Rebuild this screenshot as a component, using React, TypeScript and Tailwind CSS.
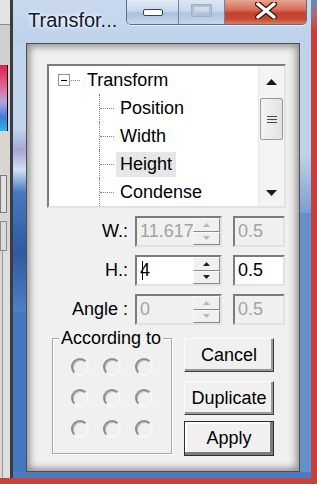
import React from "react";

const sunken =
    "border-2 border-t-[#7c7c7c] border-l-[#7c7c7c] border-r-[#e2e2e2] border-b-[#e2e2e2]";

const SpinArrows = ({ disabled }: { disabled?: boolean }) => {
    const fill = disabled ? "#b8b8b8" : "#202020";
    return (
        <div className="w-[27px] flex flex-col bg-[#f0f0f0]">
            <div className="flex-1 flex items-center justify-center border border-t-[#fafafa] border-l-[#fafafa] border-r-[#8a8a8a] border-b-[#8a8a8a]">
                <svg width="7" height="4" viewBox="0 0 7 4">
                    <path d="M0 4 L3.5 0 L7 4 Z" fill={fill} />
                </svg>
            </div>
            <div className="flex-1 flex items-center justify-center border border-t-[#fafafa] border-l-[#fafafa] border-r-[#8a8a8a] border-b-[#8a8a8a]">
                <svg width="7" height="4" viewBox="0 0 7 4">
                    <path d="M0 0 L3.5 4 L7 0 Z" fill={fill} />
                </svg>
            </div>
        </div>
    );
};

const FieldRow = ({
    label,
    value,
    step,
    disabled,
    caret,
}: {
    label: string;
    value: string;
    step: string;
    disabled?: boolean;
    caret?: boolean;
}) => {
    const bg = disabled ? "bg-[#f0f0f0]" : "bg-white";
    const color = disabled ? "text-[#a3a3a3]" : "text-black";
    return (
        <div className="flex items-center h-[31px]">
            <div className="w-[82px] text-right pr-[1px]">{label}</div>
            <div className={`ml-[6px] w-[87px] h-[31px] flex ${sunken} ${bg}`}>
                <div className={`flex-1 overflow-hidden whitespace-nowrap flex items-center pl-[3px] ${color}`}>
                    {value}
                    {caret ? <span className="inline-block w-[1px] h-[19px] bg-black -ml-[8px]" /> : null}
                </div>
                <SpinArrows disabled={disabled} />
            </div>
            <div className={`ml-[11px] w-[52px] h-[31px] flex items-center pl-[3px] ${sunken} ${bg} ${color}`}>
                {step}
            </div>
        </div>
    );
};

const TreeChild = ({ label, selected }: { label: string; selected?: boolean }) => (
    <div className="flex h-[28px] items-center">
        <div className="w-[50px]" />
        <div className="w-[17px] h-full flex items-center border-l border-dotted border-[#808080]">
            <div className="w-[14px] border-t border-dotted border-[#808080]" />
        </div>
        <span className={`px-[4px] h-[25px] leading-[25px] ${selected ? "bg-[#e6e6e6]" : ""}`}>
            {label}
        </span>
    </div>
);

const Radio = () => (
    <div className="w-[18px] h-[18px] rounded-full bg-[#f0f0f0] border-2 border-t-[#8c8c8c] border-l-[#8c8c8c] border-r-[#f7f7f7] border-b-[#f7f7f7] shadow-[inset_1px_1px_0_#c4c4c4]" />
);

const LeftStrip = () => (
    <div className="w-[12px] shrink-0 h-full flex flex-col bg-[#d9d6d1] border-r-2 border-[#3c3c3c]">
        <div className="h-[25px] bg-[#e4e4e4] border-b border-[#8a8a8a]" />
        <div className="h-[40px] bg-[#cfcfcf]" />
        <div className="h-[66px] mr-[2px] border-r border-black bg-[linear-gradient(to_bottom,#d8234a,#e06a9a_35%,#b9a6d6_55%,#3a7fd9_80%,#27b8e6)]" />
        <div className="h-[44px]" />
        <div className="h-[38px] mr-[3px] border border-[#7a7a7a] bg-[#e2e2e2]" />
        <div className="h-[8px]" />
        <div className="h-[30px] mr-[3px] border border-[#8a8a8a] bg-[#dadada]" />
        <div className="flex-1 ml-[2px] border-l border-[#9a9a9a] bg-[#dedede]" />
    </div>
);

// aero side frame, light at the top and deep blue lower down
const LeftFrame = () => (
    <div className="w-[13px] shrink-0 flex flex-col">
        <div className="h-[85px] shrink-0 bg-[#c3d5eb]" />
        <div className="h-[22px] shrink-0 bg-linear-to-b from-[#c3d5eb] to-[#a8a6d6]" />
        <div className="h-[20px] shrink-0 bg-linear-to-b from-[#a8a6d6] to-[#d0e0f2]" />
        <div className="h-[22px] shrink-0 bg-linear-to-b from-[#d0e0f2] to-[#4a79c0]" />
        <div className="h-[60px] shrink-0 bg-linear-to-b from-[#4a79c0] to-[#2f5a9e]" />
        <div className="h-[60px] shrink-0 bg-linear-to-b from-[#2f5a9e] to-[#4f7fc4]" />
        <div className="flex-1 bg-[#4577bf]" />
    </div>
);

const RightFrame = () => (
    <div className="w-[11px] shrink-0 flex flex-col">
        <div className="h-[110px] shrink-0 bg-[#c0d3ea]" />
        <div className="h-[60px] shrink-0 bg-linear-to-b from-[#c0d3ea] to-[#7b9dcf]" />
        <div className="flex-1 bg-[#6690cc]" />
    </div>
);

const CaptionButtons = () => (
    <div className="ml-auto mr-[4px] h-[25px] flex border border-t-0 border-[#5b6f8d] rounded-b-[5px] overflow-hidden shadow-[0_1px_0_rgba(255,255,255,0.6)]">
        <div className="w-[52px] flex items-center justify-center bg-[linear-gradient(to_bottom,#e2ebf6,#c9d8ec_45%,#a9c0de_55%,#c4d6ec)] border-r border-[#6f82a0]">
            <svg width="20" height="7" viewBox="0 0 20 7">
                <rect x="0.5" y="0.5" width="19" height="6" rx="1.5" fill="#ffffff" stroke="#36445a" />
            </svg>
        </div>
        <div className="w-[46px] flex items-start justify-center pt-[4px] bg-[linear-gradient(to_bottom,#dde7f3,#cad8ea_45%,#b0c4de_55%,#c6d7ec)] border-r border-[#6f82a0]">
            <svg width="21" height="13" viewBox="0 0 21 13">
                <rect x="1.5" y="1.5" width="18" height="10" fill="none" stroke="#aebfd6" strokeWidth="3" />
                <rect x="0.5" y="0.5" width="20" height="12" fill="none" stroke="#9fb0c8" strokeWidth="1" />
            </svg>
        </div>
        <div className="w-[81px] flex items-start justify-center pt-[2px] bg-[linear-gradient(to_bottom,#e7a493,#d66f58_40%,#c2402c_55%,#c84b35_80%,#d97c5f)]">
            <svg width="22" height="17" viewBox="0 0 22 17">
                <path d="M3 2 L19 15 M19 2 L3 15" stroke="#3b1610" strokeWidth="6" strokeLinecap="round" />
                <path d="M3 2 L19 15 M19 2 L3 15" stroke="#ffffff" strokeWidth="3.5" strokeLinecap="round" />
            </svg>
        </div>
    </div>
);

export default function App() {
    return (
        <div className="w-[317px] h-[484px] overflow-hidden flex flex-col bg-[#c8423b] font-['Liberation_Sans',Arial,sans-serif] text-[18px] text-black">
            <div className="flex h-[478px] shrink-0">
                <LeftStrip />
                <div className="w-[299px] shrink-0 h-full flex flex-col border-l border-[#2f3f55] bg-[#4a78bd]">
                    <div className="h-[43px] shrink-0 flex items-start bg-linear-to-b from-[#c9daee] to-[#bcd1ea]">
                        <div className="pl-[15px] pt-[5px] text-[20px] text-[#101830] [text-shadow:0_0_6px_#ffffff,0_0_3px_#ffffff]">
                            Transfor...
                        </div>
                        <CaptionButtons />
                    </div>
                    <div className="flex-1 min-h-0 flex">
                        <LeftFrame />
                        <div className="flex-1 min-w-0 bg-[#f0f0f0] border border-[#4e4e4e] shadow-[inset_0_0_7px_3px_rgba(70,70,70,0.55)] pl-[20px] pr-[12px] pt-[20px] flex flex-col">
                            <div className={`w-[239px] h-[144px] shrink-0 flex ${sunken}`}>
                                <div className="flex-1 bg-white flex flex-col overflow-hidden">
                                    <div className="flex h-[28px] items-center">
                                        <div className="ml-[9px] w-[12px] h-[12px] border border-[#8f8f8f] bg-white flex items-center justify-center">
                                            <div className="w-[6px] h-[1px] bg-black" />
                                        </div>
                                        <div className="ml-[1px] w-[9px] border-t border-dotted border-[#808080]" />
                                        <span className="ml-[3px] px-[4px]">Transform</span>
                                    </div>
                                    <TreeChild label="Position" />
                                    <TreeChild label="Width" />
                                    <TreeChild label="Height" selected />
                                    <TreeChild label="Condense" />
                                </div>
                                <div className="w-[26px] bg-[#f4f4f4] border-l border-[#e8e8e8] flex flex-col">
                                    <div className="h-[32px] flex items-center justify-center">
                                        <svg width="11" height="6" viewBox="0 0 11 6">
                                            <path d="M0 6 L5.5 0 L11 6 Z" fill="#1a1a1a" />
                                        </svg>
                                    </div>
                                    <div className="mx-[1px] h-[42px] rounded-[2px] border border-[#9a9a9a] bg-[linear-gradient(to_right,#f4f4f4,#e2e2e2)] flex flex-col items-center justify-center gap-[2px]">
                                        <div className="w-[10px] h-[1px] bg-[#4a4a4a]" />
                                        <div className="w-[10px] h-[1px] bg-[#4a4a4a]" />
                                        <div className="w-[10px] h-[1px] bg-[#4a4a4a]" />
                                    </div>
                                    <div className="flex-1 flex items-end justify-center pb-[10px]">
                                        <svg width="11" height="6" viewBox="0 0 11 6">
                                            <path d="M0 0 L5.5 6 L11 0 Z" fill="#1a1a1a" />
                                        </svg>
                                    </div>
                                </div>
                            </div>

                            <div className="mt-[8px] flex flex-col gap-[8px]">
                                <FieldRow label="W.:" value="11.617" step="0.5" disabled />
                                <FieldRow label="H.:" value="4" step="0.5" caret />
                                <FieldRow label="Angle :" value="0" step="0.5" disabled />
                            </div>

                            <div className="mt-[3px] flex">
                                <fieldset className="ml-[5px] w-[120px] min-w-0 h-[126px] border border-[#a8a8a8] shadow-[1px_1px_0_#ffffff,inset_1px_1px_0_#ffffff] p-0">
                                    <legend className="ml-[6px] px-[2px] leading-[20px] whitespace-nowrap">According to</legend>
                                    <div className="ml-[18px] mt-[10px] grid grid-cols-3 gap-x-[14px] gap-y-[13px] w-[82px]">
                                        {Array.from({ length: 9 }).map((_, i) => (
                                            <Radio key={i} />
                                        ))}
                                    </div>
                                </fieldset>
                                <div className="ml-[12px] mt-[10px] w-[90px] flex flex-col">
                                    <div className="h-[34px] flex items-center justify-center bg-[#f0f0f0] border border-t-[#fbfbfb] border-l-[#fbfbfb] border-r-[#3c3c3c] border-b-[#3c3c3c] shadow-[inset_-2px_-2px_0_#9a9a9a]">
                                        Cancel
                                    </div>
                                    <div className="mt-[9px] h-[34px] flex items-center justify-center bg-[#f0f0f0] border border-t-[#fbfbfb] border-l-[#fbfbfb] border-r-[#3c3c3c] border-b-[#3c3c3c] shadow-[inset_-2px_-2px_0_#9a9a9a]">
                                        Duplicate
                                    </div>
                                    <div className="mt-[6px] h-[35px] flex items-center justify-center bg-[#f0f0f0] border border-[#2e2e2e] shadow-[inset_-3px_-3px_0_#7c7c7c,inset_2px_2px_0_#ffffff]">
                                        Apply
                                    </div>
                                </div>
                            </div>
                        </div>
                        <RightFrame />
                    </div>
                    <div className="h-[6px] shrink-0 bg-[#4d7bc0]" />
                </div>
                <div className="flex-1 bg-linear-to-b from-[#6b86b4] to-[#c4413b] to-[30px]" />
            </div>
        </div>
    );
}
